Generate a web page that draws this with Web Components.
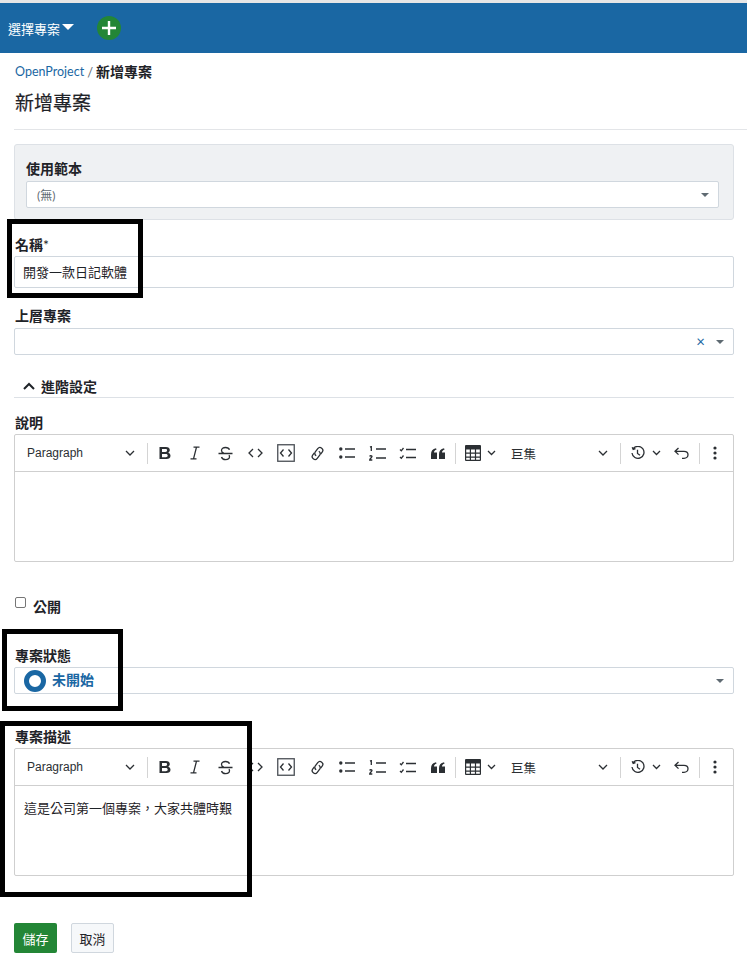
<!DOCTYPE html>
<html lang="zh-Hant">
<head>
<meta charset="utf-8">
<title>新增專案</title>
<style>
    html, body { margin: 0; padding: 0; background: #fff; }
    body {
        position: relative;
        height: 955px;
        overflow: hidden;
        color: #1f2328;
        font: 14px Lato, "Noto Sans CJK TC", sans-serif;
    }
</style>
</head>
<body>
<op-header></op-header>
<op-page>
    <op-template-panel></op-template-panel>
    <op-field label="名稱" required style="--gap:1px;margin-top:15px"><op-input value="開發一款日記軟體"></op-input></op-field>
    <op-field label="上層專案" style="--gap:2px;margin-top:18px"><op-select clearable></op-select></op-field>
    <op-section title="進階設定"></op-section>
    <op-field label="說明" style="--gap:1px;margin-top:15px"><op-editor></op-editor></op-field>
    <op-check label="公開"></op-check>
    <op-field label="專案狀態" style="--gap:1px;margin-top:29px"><op-select><op-status text="未開始"></op-status></op-select></op-field>
    <op-field label="專案描述" style="--gap:1px;margin-top:33px"><op-editor>這是公司第一個專案，大家共體時艱</op-editor></op-field>
    <op-actions></op-actions>
</op-page>
<mark-box style="left:7px;top:219px;width:136px;height:79px"></mark-box>
<mark-box style="left:2px;top:629px;width:121px;height:82px"></mark-box>
<mark-box style="left:0;top:721px;width:252px;height:176px"></mark-box>

<template id="tpl-toolbar">
    <style>
        :host { display: flex; align-items: center; height: 36px; color: #2b2f33; font: 12px "Liberation Sans", "Noto Sans CJK TC", sans-serif; }
        .drop { display: flex; align-items: center; box-sizing: border-box; height: 36px; flex: none; }
        .para { width: 132px; padding-left: 12px; justify-content: space-between; padding-right: 12px; }
        .macro { width: 120px; padding-left: 11px; padding-right: 12px; justify-content: space-between; font-size: 12.5px; }
        .table { width: 44px; padding-left: 9px; gap: 6px; }
        .hist { width: 40px; padding-left: 3px; }
        .sep { width: 1px; height: 21px; background: #d4d4d4; flex: none; }
        .btn { width: 30.2px; height: 36px; display: flex; align-items: center; justify-content: center; flex: none; }
        svg { display: block; flex: none; }
        .s { fill: none; stroke: #2b2f33; stroke-width: 1.3; }
        .f { fill: #2b2f33; }
    </style>
    <div class="drop para"><span>Paragraph</span><svg width="10" height="7" viewBox="0 0 10 7"><path class="s" stroke-width="1.5" d="M1 1l4 4 4-4"/></svg></div>
    <div class="sep"></div>
    <div style="width:2px"></div>
    <div class="btn"><svg width="14" height="14" viewBox="0 0 14 14"><path class="f" fill-rule="evenodd" d="M1.5 1H8c2.4 0 3.8 1.2 3.8 3.1 0 1.2-.6 2.1-1.6 2.6 1.4.4 2.3 1.5 2.3 3 0 2.1-1.6 3.3-4.1 3.3H1.500zM4 3.100v2.800h3.400c1.100 0 1.700-.5 1.700-1.400s-.6-1.400-1.700-1.400zM4 8v3.200h3.800c1.200 0 1.900-.6 1.900-1.600S9 8 7.800 8z"/></svg></div>
    <div class="btn"><svg width="12" height="14" viewBox="0 0 12 14"><path class="s" d="M4.500 1.200h6M1.500 12.800h6M7.500 1.200l-3 11.600"/></svg></div>
    <div class="btn"><svg width="15" height="15" viewBox="0 0 15 15"><path class="s" d="M0.500 7.500h14M11.500 3.800C11 2.400 9.500 1.500 7.500 1.500c-2.300 0-4 1.100-4 2.900 0 1.300.8 2.200 2.300 2.700M3.500 11c.4 1.600 2 2.600 4.100 2.600 2.300 0 3.900-1.100 3.900-2.800 0-.7-.2-1.200-.5-1.700"/></svg></div>
    <div class="btn"><svg width="15" height="10" viewBox="0 0 15 10"><path class="s" stroke-width="1.500" d="M5 1L1 5l4 4M10 1l4 4-4 4"/></svg></div>
    <div class="btn"><svg width="18" height="18" viewBox="0 0 18 18"><rect class="s" x=".75" y=".75" width="16.500" height="16.500" stroke-width="1.200" style="stroke:#4a4f55"/><path class="s" d="M6.500 5.500L3.500 9l3 3.500M11.500 5.500l3 3.500-3 3.500"/></svg></div>
    <div class="btn" style="margin-left:1px"><svg width="15" height="15" viewBox="0 0 15 15"><g transform="rotate(-52 7.500 7.500)"><path class="s" d="M6 4.700H3.500a2.800 2.800 0 0 0 0 5.600H7.500a2.800 2.800 0 0 0 2.600-3.200"/><path class="s" d="M9 10.300H11.500a2.800 2.800 0 0 0 0-5.600H7.500a2.800 2.800 0 0 0-2.600 3.200"/></g></svg></div>
    <div class="btn"><svg width="16" height="12" viewBox="0 0 16 12"><circle class="f" cx="1.800" cy="2" r="1.700"/><circle class="f" cx="1.800" cy="10" r="1.700"/><path class="s" stroke-width="1.500" d="M6 2h10M6 10h10"/></svg></div>
    <div class="btn"><svg width="17" height="15" viewBox="0 0 17 15"><path class="s" stroke-width="1.200" d="M1 1.200L2.300.6V5M.7 10.500c.3-1 2.300-1 2.300.1 0 1-2.300 2.100-2.300 3.400H3.300"/><path class="s" stroke-width="1.500" d="M7 3h10M7 12h10"/></svg></div>
    <div class="btn"><svg width="17" height="13" viewBox="0 0 17 13"><path class="s" d="M1 2.500l1.300 1.300L4.500 1M1 10l1.300 1.300L4.500 8.500"/><path class="s" stroke-width="1.500" d="M7 2.500h10M7 10.500h10"/></svg></div>
    <div class="btn"><svg width="14" height="11" viewBox="0 0 14 11"><path class="f" d="M0 11V6.200C0 3 1.600 1 5 .2l.6 1.200C4 2 3 3 3 4.400h3V11zM8 11V6.200C8 3 9.600 1 13 .2l.6 1.200C12 2 11 3 11 4.400h3V11z"/></svg></div>
    <div style="width:2px"></div>
    <div class="sep"></div>
    <div class="drop table"><svg width="16" height="16" viewBox="0 0 16 16"><path class="f" d="M1 0h14a1 1 0 0 1 1 1v14a1 1 0 0 1-1 1H1a1 1 0 0 1-1-1V1a1 1 0 0 1 1-1zm.2 4.500v3h3.600v-3zm4.800 0v3h3.900v-3zm5.100 0v3h3.700v-3zM1.200 8.700v2.800h3.600V8.700zm4.800 0v2.800h3.900V8.700zm5.100 0v2.800h3.700V8.700zM1.200 12.700v2.100h3.600v-2.100zm4.800 0v2.100h3.900v-2.100zm5.100 0v2.100h3.700v-2.100z" fill-rule="evenodd"/></svg><svg width="9" height="6" viewBox="0 0 9 6"><path class="s" d="M1 1l3.500 3.500L8 1"/></svg></div>
    <div class="drop macro"><span>巨集</span><svg width="10" height="7" viewBox="0 0 10 7"><path class="s" stroke-width="1.500" d="M1 1l4 4 4-4"/></svg></div>
    <div class="sep"></div>
    <div style="width:7px"></div>
    <div class="drop hist"><svg width="14" height="14" viewBox="0 0 14 14"><path class="s" d="M2.200 2.700A6 6 0 1 1 1 7M1.200 1.200l1 2.300 2.300-.8M6.500 3.800V7.500l2.500 1.800"/></svg><svg width="9" height="6" viewBox="0 0 9 6" style="margin-left:7px"><path class="s" d="M1 1l3.500 3.500L8 1"/></svg></div>
    <div class="btn" style="width:28px"><svg width="15" height="12" viewBox="0 0 15 12"><path class="s" stroke-width="1.400" d="M4.500 1L1 4.300l3.500 3.300M1 4.300h9c2.300 0 4 1.500 4 3.500s-1.700 3.500-4 3.500H8"/></svg></div>
    <div class="sep" style="margin-left:3px"></div>
    <div class="btn" style="width:31px"><svg width="4" height="14" viewBox="0 0 4 14"><circle class="f" cx="2" cy="2" r="1.600"/><circle class="f" cx="2" cy="7" r="1.600"/><circle class="f" cx="2" cy="12" r="1.600"/></svg></div>
</template>

<script>
    // small helper, every element here just renders a string into its open root
    class Base extends HTMLElement {
        constructor() {
            super()
            this.attachShadow({ mode: 'open' })
        }
        connectedCallback() {
            this.shadowRoot.innerHTML = this.render()
        }
    }

    class OpHeader extends Base {
        render() {
            return `<style>
                :host { display: flex; align-items: center; box-sizing: border-box; height: 53px; border-top: 3px solid #e6e6e6; background: #1a67a3; color: #fff; padding-left: 8px; font-size: 13px; }
                .arrow { width: 0; height: 0; border: 6px solid transparent; border-top: 6px solid #fff; border-bottom: 0; margin-left: 2px; margin-top: -3px; }
                .plus { width: 24px; height: 24px; border-radius: 50%; background: #238636; margin-left: 23px; display: flex; align-items: center; justify-content: center; }
            </style>
            <span>選擇專案</span><span class="arrow"></span>
            <span class="plus"><svg width="14" height="14" viewBox="0 0 14 14"><path d="M7 0v14M0 7h14" stroke="#fff" stroke-width="2.400"/></svg></span>`
        }
    }

    class OpPage extends Base {
        render() {
            return `<style>
                :host { display: block; padding: 0 13px 0 14px; }
                .crumb { height: 20px; margin: 9px 0 0 1px; line-height: 20px; font-size: 14px; display: flex; gap: 3px; }
                .crumb a { color: #1a67a3; font-size: 12.5px; }
                .crumb .sl { color: #5f6a72; font-size: 13px; }
                .crumb b { color: #1f2328; }
                h1 { margin: 8px 0 0 1px; font-size: 19px; line-height: 25px; font-weight: 400; color: #1f2328; -webkit-text-stroke: .2px #1f2328; }
                hr { border: 0; height: 1px; background: #e3e5e8; margin: 14px -13px 14px 0; }
            </style>
            <div class="crumb"><a>OpenProject</a><span class="sl">/</span><b>新增專案</b></div>
            <h1>新增專案</h1>
            <hr>
            <slot></slot>`
        }
    }

    class OpTemplatePanel extends Base {
        render() {
            return `<style>
                :host { display: block; box-sizing: border-box; height: 76px; background: #eff1f3; border: 1px solid #dde1e6; border-radius: 3px; padding: 14px 14px 0 11px; }
            </style>
            <op-field label="使用範本" style="--gap:2px;--lx:0"><op-select small>(無)</op-select></op-field>`
        }
    }

    class OpField extends Base {
        render() {
            const star = this.hasAttribute('required') ? '<span class="star">*</span>' : ''
            return `<style>
                :host { display: block; }
                label { display: block; font-size: 14px; line-height: 20px; font-weight: 700; color: #1f2328; margin-bottom: var(--gap, 3px); padding-left: var(--lx, 1px); }
                .star { font-weight: 400; }
            </style>
            <label>${this.getAttribute('label')}${star}</label><slot></slot>`
        }
    }

    class OpInput extends Base {
        render() {
            return `<style>
                :host { display: block; box-sizing: border-box; height: 32px; background: #fff; border: 1px solid #d0d7de; border-radius: 2px; padding-left: 8px; line-height: 30px; font-size: 13px; color: #1f2328; }
            </style>${this.getAttribute('value')}`
        }
    }

    class OpSelect extends Base {
        render() {
            const clear = this.hasAttribute('clearable') ? '<span class="x">×</span>' : ''
            const small = this.hasAttribute('small')
            return `<style>
                :host { display: flex; align-items: center; box-sizing: border-box; height: 27px; background: #fff; border: 1px solid #d0d7de; border-radius: 2px; padding: 0 9px ${small ? '0 10px' : '0 9px'}; font-size: 12px; color: #5f6a72; }
                .val { flex: 1; min-width: 0; display: flex; align-items: center; }
                .x { color: #1a67a3; font-size: 15px; margin-right: 11px; line-height: 1; }
                .arr { width: 0; height: 0; border: 4px solid transparent; border-top: 4px solid #5f6a72; border-bottom: 0; }
            </style>
            <span class="val"><slot></slot></span>${clear}<span class="arr"></span>`
        }
    }

    class OpStatus extends Base {
        render() {
            return `<style>
                :host { display: flex; align-items: center; gap: 6px; color: #1a67a3; font-size: 14px; font-weight: 700; }
                i { display: block; box-sizing: border-box; width: 22px; height: 22px; border-radius: 50%; border: 5px solid #1a67a3; background: #fff; }
                span { margin-top: -4px; }
            </style><i></i><span>${this.getAttribute('text')}</span>`
        }
    }

    class OpSection extends Base {
        render() {
            return `<style>
                :host { display: flex; align-items: center; box-sizing: border-box; height: 25px; margin-top: 18px; border-bottom: 1px solid #dde1e6; padding: 1px 0 0 9px; gap: 6px; font-size: 14px; font-weight: 700; color: #1f2328; }
                svg { display: block; }
            </style>
            <svg width="12" height="8" viewBox="0 0 12 8"><path d="M1 7l5-5 5 5" fill="none" stroke="#1f2328" stroke-width="2"/></svg><span>${this.getAttribute('title')}</span>`
        }
    }

    class OpEditor extends Base {
        render() {
            return `<style>
                :host { display: block; box-sizing: border-box; height: 128px; border: 1px solid #cfcfcf; border-radius: 2px; background: #fff; }
                ck-toolbar { border-bottom: 1px solid #cfcfcf; }
                .body { padding: 12px 9px; font-size: 13px; line-height: 20px; color: #1f2328; }
            </style>
            <ck-toolbar></ck-toolbar><div class="body"><slot></slot></div>`
        }
    }

    class CkToolbar extends HTMLElement {
        constructor() {
            super()
            const template = document.querySelector('#tpl-toolbar').content
            this.attachShadow({ mode: 'open' }).appendChild(template.cloneNode(true))
        }
    }

    class OpCheck extends Base {
        render() {
            return `<style>
                :host { display: flex; align-items: flex-start; margin-top: 35px; height: 20px; gap: 7px; font-size: 14px; font-weight: 700; color: #1f2328; }
                i { display: block; box-sizing: border-box; width: 11px; height: 11px; border: 1px solid #767676; border-radius: 2px; background: #fff; margin-left: 1px; }
                span { line-height: 20px; }
            </style><i></i><span>${this.getAttribute('label')}</span>`
        }
    }

    class OpActions extends Base {
        render() {
            return `<style>
                :host { display: flex; gap: 14px; margin-top: 47px; }
                span { display: flex; align-items: center; justify-content: center; box-sizing: border-box; width: 43px; height: 30px; border-radius: 2px; font-size: 13px; }
                .save { background: #238636; color: #fff; }
                .cancel { background: #f6f8fa; border: 1px solid #d0d7de; color: #1f2328; }
            </style><span class="save">儲存</span><span class="cancel">取消</span>`
        }
    }

    // the black rectangles someone drew over the screenshot
    class MarkBox extends Base {
        render() {
            return `<style>
                :host { display: block; position: absolute; box-sizing: border-box; border: 5px solid #000; pointer-events: none; }
            </style>`
        }
    }

    customElements.define('op-header', OpHeader)
    customElements.define('op-page', OpPage)
    customElements.define('op-template-panel', OpTemplatePanel)
    customElements.define('op-field', OpField)
    customElements.define('op-input', OpInput)
    customElements.define('op-select', OpSelect)
    customElements.define('op-status', OpStatus)
    customElements.define('op-section', OpSection)
    customElements.define('op-editor', OpEditor)
    customElements.define('ck-toolbar', CkToolbar)
    customElements.define('op-check', OpCheck)
    customElements.define('op-actions', OpActions)
    customElements.define('mark-box', MarkBox)
</script>
</body>
</html>
